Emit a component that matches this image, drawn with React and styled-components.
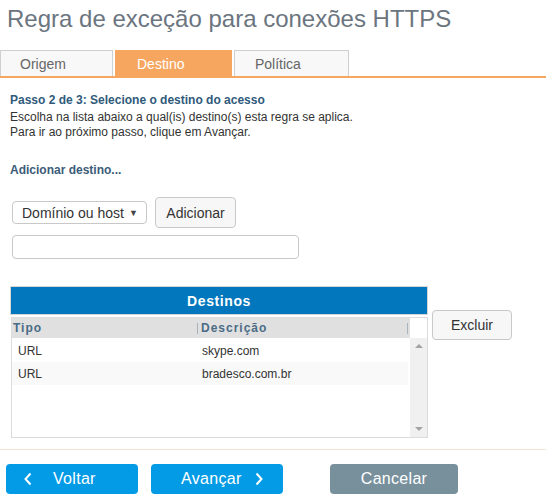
import React from "react";
import styled, { createGlobalStyle } from "styled-components";

const Global = createGlobalStyle`
  html, body { margin: 0; padding: 0; background: #fff; }
  body { font-family: "Liberation Sans", Arial, sans-serif; }
  * { box-sizing: border-box; }
`;

const Page = styled.div`
  width: 546px;
  height: 504px;
  overflow: hidden;
  position: relative;
`;

const Title = styled.h1`
  margin: 0;
  padding: 5px 0 0 7px;
  height: 50px;
  font-size: 24px;
  line-height: 28px;
  font-weight: normal;
  color: #6b7580;
`;

const TabBar = styled.div`
  display: flex;
  gap: 2px;
  height: 28px;
  border-bottom: 2px solid #f7a65f;
`;

const Tab = styled.div`
  width: ${(p) => p.w}px;
  height: 26px;
  display: flex;
  align-items: center;
  padding-left: ${(p) => p.pl}px;
  font-size: 14px;
  color: ${(p) => (p.active ? "#fff" : "#666")};
  background: ${(p) => (p.active ? "#f7a65f" : "#f8f8f8")};
  border: 1px solid ${(p) => (p.active ? "#f7a65f" : "#cfcfcf")};
  border-bottom: none;
`;

const Content = styled.div`
  padding: 15px 0 0 10px;
`;

const StepTitle = styled.div`
  font-size: 12px;
  font-weight: bold;
  line-height: 15px;
  margin-bottom: 2px;
  color: #2f5a7b;
`;

const Text = styled.div`
  font-size: 12px;
  line-height: 15px;
  color: #333;
`;

const SubTitle = styled.div`
  margin-top: 23px;
  font-size: 12px;
  font-weight: bold;
  line-height: 15px;
  color: #3b5b78;
`;

const AddRow = styled.div`
  margin-top: 19px;
  display: flex;
  align-items: center;
  gap: 8px;
  padding-left: 2px;
`;

const Select = styled.div`
  width: 135px;
  height: 23px;
  border: 1px solid #c8c8c8;
  border-radius: 4px;
  display: flex;
  align-items: center;
  justify-content: space-between;
  padding: 0 8px 0 9px;
  font-size: 14px;
  color: #333;
`;

const Caret = styled.span`
  font-size: 9px;
  color: #444;
`;

const LightButton = styled.div`
  width: ${(p) => p.w}px;
  height: ${(p) => p.h}px;
  border: 1px solid #c8c8c8;
  border-radius: 4px;
  background: #f7f7f7;
  display: flex;
  align-items: center;
  justify-content: center;
  font-size: 14px;
  color: #333;
`;

const Input = styled.div`
  margin: 7px 0 0 2px;
  width: 287px;
  height: 24px;
  border: 1px solid #c8c8c8;
  border-radius: 4px;
`;

const TableRow = styled.div`
  margin-top: 27px;
  display: flex;
  align-items: flex-start;
  gap: 4px;
`;

const TableBox = styled.div`
  width: 418px;
`;

const TableHead = styled.div`
  height: 29px;
  background: #0277bd;
  border: 1px solid #d6d6d6;
  color: #fff;
  font-weight: bold;
  font-size: 14px;
  letter-spacing: 0.6px;
  display: flex;
  align-items: center;
  justify-content: center;
`;

const Grid = styled.div`
  margin: 2px 0 0 1px;
  height: 121px;
  border: 1px solid #dcdcdc;
  display: grid;
  grid-template-columns: 1fr 17px;
  grid-template-rows: 20px 1fr;
`;

const ColHead = styled.div`
  background: #e0e0e0;
  display: grid;
  grid-template-columns: 185px 1fr;
  font-size: 12px;
  font-weight: bold;
  letter-spacing: 1px;
  color: #4a6b86;
  line-height: 20px;
`;

const ColCell = styled.div`
  padding-left: ${(p) => p.pl}px;
  position: relative;
  ${(p) =>
    p.sep &&
    `&::before { content: ""; position: absolute; left: 0; top: 5px; width: 1px; height: 11px; background: #a8b4be; }`}
  ${(p) =>
    p.sepEnd &&
    `&::after { content: ""; position: absolute; right: 2px; top: 5px; width: 1px; height: 11px; background: #a8b4be; }`}
`;

const Corner = styled.div`
  background: #fff;
`;

const Body = styled.div`
  padding-top: 1px;
  grid-column: 1;
`;

const Row = styled.div`
  height: 23px;
  display: grid;
  grid-template-columns: 186px 1fr;
  align-items: center;
  font-size: 12px;
  color: #333;
  background: ${(p) => (p.alt ? "#f9f9f9" : "#fff")};
  margin-right: 2px;
`;

const Cell = styled.div`
  padding-left: ${(p) => p.pl}px;
`;

const Scroll = styled.div`
  background: #f0f0f0;
  display: flex;
  flex-direction: column;
  justify-content: space-between;
  align-items: center;
  padding: 6px 0 6px;
`;

const Arrow = styled.div`
  width: 0;
  height: 0;
  border-left: 4px solid transparent;
  border-right: 4px solid transparent;
  ${(p) =>
    p.up
      ? "border-bottom: 4px solid #a3a3a3;"
      : "border-top: 4px solid #a3a3a3;"}
`;

const ExcluirWrap = styled.div`
  margin-top: 24px;
`;

const Divider = styled.div`
  margin-top: 11px;
  height: 1px;
  background: #f4e4d6;
`;

const Footer = styled.div`
  display: flex;
  padding: 14px 0 0 6px;
`;

const ActionButton = styled.div`
  width: ${(p) => p.w}px;
  height: 30px;
  margin-left: ${(p) => p.ml || 0}px;
  border-radius: 4px;
  background: ${(p) => (p.grey ? "#78909c" : "#039be5")};
  color: #fff;
  font-size: 16px;
  display: flex;
  align-items: center;
  justify-content: ${(p) => p.justify || "center"};
  padding: ${(p) => p.pad || "0"};
  gap: ${(p) => p.gap || 0}px;
  letter-spacing: 0.3px;
`;

const Chevron = ({ dir }) => (
  <svg width="10" height="14" viewBox="0 0 10 14">
    <path
      d={dir === "left" ? "M7.5 1.5 L2.5 7 L7.5 12.5" : "M2.5 1.5 L7.5 7 L2.5 12.5"}
      fill="none"
      stroke="#fff"
      strokeWidth="2"
    />
  </svg>
);

export default function App() {
  return (
    <Page>
      <Global />
      <Title>Regra de exceção para conexões HTTPS</Title>
      <TabBar>
        <Tab w={113} pl={19}>Origem</Tab>
        <Tab w={117} pl={21} active>
          Destino
        </Tab>
        <Tab w={115} pl={20}>Política</Tab>
      </TabBar>
      <Content>
        <StepTitle>Passo 2 de 3: Selecione o destino do acesso</StepTitle>
        <Text>Escolha na lista abaixo a qual(is) destino(s) esta regra se aplica.</Text>
        <Text>Para ir ao próximo passo, clique em Avançar.</Text>
        <SubTitle>Adicionar destino...</SubTitle>
        <AddRow>
          <Select>
            Domínio ou host <Caret>▼</Caret>
          </Select>
          <LightButton w={81} h={31}>
            Adicionar
          </LightButton>
        </AddRow>
        <Input />
        <TableRow>
          <TableBox>
            <TableHead>Destinos</TableHead>
            <Grid>
              <ColHead>
                <ColCell pl={1}>Tipo</ColCell>
                <ColCell pl={4} sep sepEnd>
                  Descrição
                </ColCell>
              </ColHead>
              <Corner />
              <Body>
                <Row>
                  <Cell pl={6}>URL</Cell>
                  <Cell pl={4}>skype.com</Cell>
                </Row>
                <Row alt>
                  <Cell pl={6}>URL</Cell>
                  <Cell pl={4}>bradesco.com.br</Cell>
                </Row>
              </Body>
              <Scroll>
                <Arrow up />
                <Arrow />
              </Scroll>
            </Grid>
          </TableBox>
          <ExcluirWrap>
            <LightButton w={80} h={30}>
              Excluir
            </LightButton>
          </ExcluirWrap>
        </TableRow>
      </Content>
      <Divider />
      <Footer>
        <ActionButton w={132} justify="flex-start" pad="0 0 0 17px" gap={20}>
          <Chevron dir="left" />
          Voltar
        </ActionButton>
        <ActionButton w={132} ml={13} justify="flex-start" pad="0 0 0 30px" gap={12}>
          Avançar
          <Chevron dir="right" />
        </ActionButton>
        <ActionButton w={128} ml={47} grey>
          Cancelar
        </ActionButton>
      </Footer>
    </Page>
  );
}
